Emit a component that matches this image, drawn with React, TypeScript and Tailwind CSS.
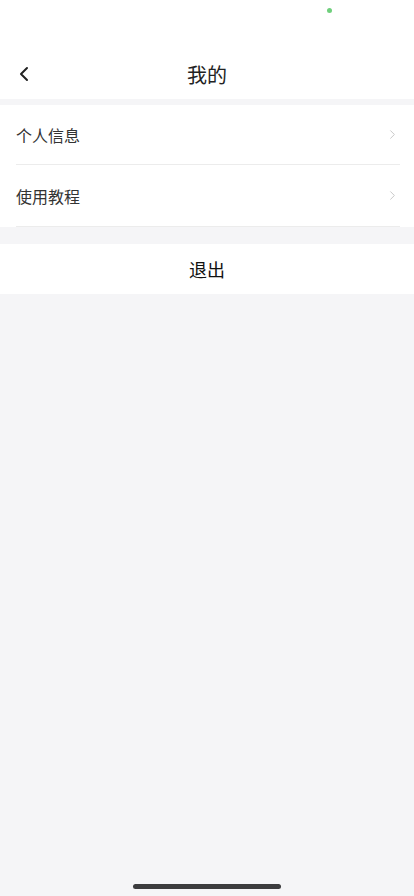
import { ChevronLeft, ChevronRight } from "lucide-react";

const rows = ["个人信息", "使用教程"];

export default function App() {
  return (
    <div
      className="min-h-[896px] bg-[#f5f5f7] flex flex-col"
      style={{ fontFamily: '"Noto Sans CJK SC", "Noto Sans", sans-serif' }}
    >
      {/* status bar */}
      <div className="h-[50px] bg-white relative">
        <span className="absolute left-[327px] top-[8px] w-[5px] h-[5px] rounded-full bg-[#6fcf7c]" />
      </div>

      {/* nav bar */}
      <div className="h-[49px] bg-white flex items-center relative">
        <button className="absolute left-[12px] top-[12px] text-[#222]">
          <ChevronLeft className="w-[24px] h-[24px]" strokeWidth={2} />
        </button>
        <h1 className="flex-1 text-center text-[20px] text-[#222] leading-none">我的</h1>
      </div>

      <div className="h-[6px]" />

      {/* list */}
      <div className="bg-white">
        {rows.map((label, i) => (
          <div key={label} className="pl-4 pr-[14px]">
            <div
              className={
                "flex items-center justify-between border-b border-[#ececec] " +
                (i === 0 ? "h-[60px]" : "h-[62px]")
              }
            >
              <span className="text-[16px] text-[#333]">{label}</span>
              <ChevronRight className="w-[15px] h-[15px] text-[#c4c4c4]" strokeWidth={1.5} />
            </div>
          </div>
        ))}
      </div>

      <div className="h-[17px]" />

      <button className="h-[50px] bg-white flex items-center justify-center text-[18px] text-[#111]">
        退出
      </button>

      <div className="flex-1" />

      {/* home indicator */}
      <div className="h-[21px] flex justify-center pt-[9px]">
        <span className="w-[148px] h-[5px] rounded-full bg-[#3c3c3e]" />
      </div>
    </div>
  );
}
